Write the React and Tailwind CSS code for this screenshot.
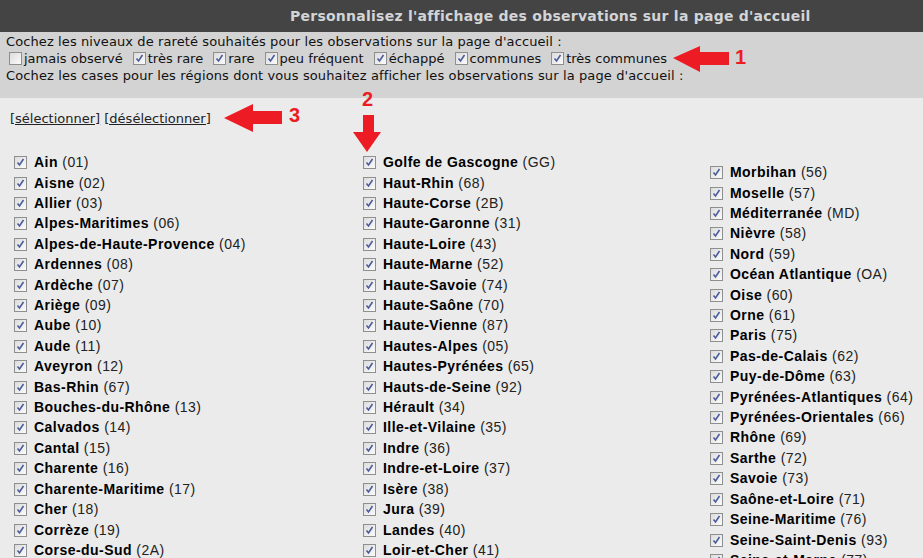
import React from 'react'

const col1 = [
  ['Ain', '01'], ['Aisne', '02'], ['Allier', '03'], ['Alpes-Maritimes', '06'],
  ['Alpes-de-Haute-Provence', '04'], ['Ardennes', '08'], ['Ardèche', '07'], ['Ariège', '09'],
  ['Aube', '10'], ['Aude', '11'], ['Aveyron', '12'], ['Bas-Rhin', '67'],
  ['Bouches-du-Rhône', '13'], ['Calvados', '14'], ['Cantal', '15'], ['Charente', '16'],
  ['Charente-Maritime', '17'], ['Cher', '18'], ['Corrèze', '19'], ['Corse-du-Sud', '2A'],
]

const col2 = [
  ['Golfe de Gascogne', 'GG'], ['Haut-Rhin', '68'], ['Haute-Corse', '2B'], ['Haute-Garonne', '31'],
  ['Haute-Loire', '43'], ['Haute-Marne', '52'], ['Haute-Savoie', '74'], ['Haute-Saône', '70'],
  ['Haute-Vienne', '87'], ['Hautes-Alpes', '05'], ['Hautes-Pyrénées', '65'], ['Hauts-de-Seine', '92'],
  ['Hérault', '34'], ['Ille-et-Vilaine', '35'], ['Indre', '36'], ['Indre-et-Loire', '37'],
  ['Isère', '38'], ['Jura', '39'], ['Landes', '40'], ['Loir-et-Cher', '41'],
]

const col3 = [
  ['Morbihan', '56'], ['Moselle', '57'], ['Méditerranée', 'MD'], ['Nièvre', '58'],
  ['Nord', '59'], ['Océan Atlantique', 'OA'], ['Oise', '60'], ['Orne', '61'],
  ['Paris', '75'], ['Pas-de-Calais', '62'], ['Puy-de-Dôme', '63'], ['Pyrénées-Atlantiques', '64'],
  ['Pyrénées-Orientales', '66'], ['Rhône', '69'], ['Sarthe', '72'], ['Savoie', '73'],
  ['Saône-et-Loire', '71'], ['Seine-Maritime', '76'], ['Seine-Saint-Denis', '93'], ['Seine-et-Marne', '77'],
]

const rarity = [
  ['jamais observé', false], ['très rare', true], ['rare', true], ['peu fréquent', true],
  ['échappé', true], ['communes', true], ['très communes', true],
]

function Box({ checked }) {
  return (
    <span className="inline-flex w-[13px] h-[13px] shrink-0 border border-[#8e8f8f] bg-gradient-to-br from-[#dcdcdc] to-[#fbfbfb] items-center justify-center">
      {checked && (
        <svg width="9" height="9" viewBox="0 0 9 9">
          <path d="M1.5 4.5 L3.5 7 L7.5 1" fill="none" stroke="#4b5c9c" strokeWidth="1.6" />
        </svg>
      )}
    </span>
  )
}

function Column({ items, className = '' }) {
  return (
    <div className={`flex flex-col ${className}`}>
      {items.map(([name, code]) => (
        <div key={name} className="flex items-center gap-[7px] h-[20.42px] whitespace-nowrap">
          <Box checked />
          <span className="text-[14px] tracking-[0.45px] font-['Liberation_Sans',Arial,sans-serif]">
            <b className="text-black">{name}</b> <span className="text-[#222]">({code})</span>
          </span>
        </div>
      ))}
    </div>
  )
}

export default function App() {
  return (
    <div className="relative w-[923px] h-[558px] overflow-hidden bg-[#ebebeb] font-['DejaVu_Sans',Verdana,sans-serif] text-[13px] text-[#111]">
      {/* Title bar */}
      <div className="h-[32px] bg-[#444444] flex items-center pl-[290px]">
        <span className="font-bold text-[14px] tracking-[0.25px] text-[#d2d4d6] whitespace-nowrap">
          Personnalisez l'affichage des observations sur la page d'accueil
        </span>
      </div>

      {/* Settings */}
      <div className="h-[66px] bg-[#d3d3d3] px-[6px] pt-[1px] leading-[17px] whitespace-nowrap">
        <div className="tracking-[0.1px]">Cochez les niveaux de rareté souhaités pour les observations sur la page d'accueil :</div>
        <div className="flex items-center pl-[3px]">
          {rarity.map(([label, on]) => (
            <label key={label} className="flex items-center gap-[2px] mr-[10px]">
              <Box checked={on} />
              <span>{label}</span>
            </label>
          ))}
        </div>
        <div className="tracking-[0.12px]">Cochez les cases pour les régions dont vous souhaitez afficher les observations sur la page d'accueil :</div>
      </div>

      {/* Links */}
      <div className="pl-[10px] pt-[11px] text-[#222]">
        <a className="underline">[sélectionner]</a> <a className="underline">[désélectionner]</a>
      </div>

      {/* Regions */}
      <div className="grid grid-cols-[349px_347px_1fr] pl-[14px] pt-[24px]">
        <Column items={col1} />
        <Column items={col2} />
        <Column items={col3} className="pt-[10px]" />
      </div>

      {/* Annotation arrows */}
      <svg className="absolute left-0 top-0 pointer-events-none" width="923" height="558">
        <polygon points="673,58 700,46 700,52 729,52 729,65 700,65 700,72" fill="#ed1c24" />
        <polygon points="363,115 374,115 374,132 381,132 367,152 353,132 363,132" fill="#ed1c24" />
        <polygon points="224,118 253,104 253,111 282,111 282,124 253,124 253,132" fill="#ed1c24" />
      </svg>
      <span className="absolute left-[735px] top-[46px] text-[20px] leading-[22px] font-bold text-[#ed1c24] font-['Liberation_Sans',Arial,sans-serif]">1</span>
      <span className="absolute left-[362px] top-[88px] text-[20px] leading-[22px] font-bold text-[#ed1c24] font-['Liberation_Sans',Arial,sans-serif]">2</span>
      <span className="absolute left-[289px] top-[104px] text-[20px] leading-[22px] font-bold text-[#ed1c24] font-['Liberation_Sans',Arial,sans-serif]">3</span>
    </div>
  )
}
